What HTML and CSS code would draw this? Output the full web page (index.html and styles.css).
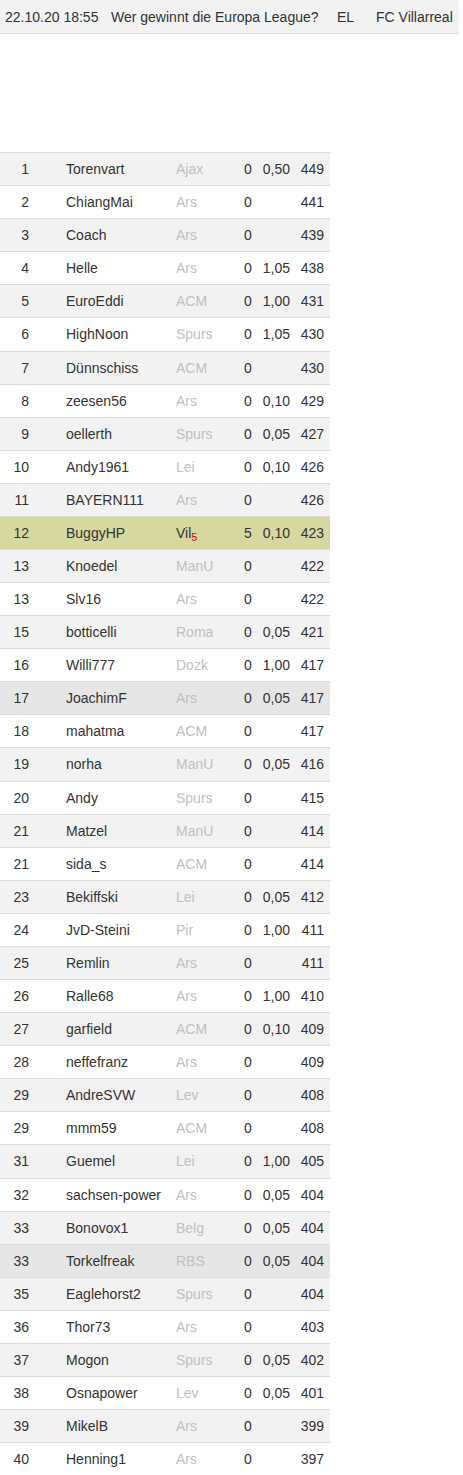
FILE: index.html
```html
<!DOCTYPE html>
<html lang="de">
<head>
<meta charset="utf-8">
<title>Tippspiel</title>
<link rel="stylesheet" href="styles.css">
</head>
<body>
<div class="head">
  <span class="h-date">22.10.20 18:55</span>
  <span class="h-q">Wer gewinnt die Europa League?</span>
  <span class="h-comp">EL</span>
  <span class="h-team">FC Villarreal</span>
</div>
<div class="board">
  <div class="row odd"><span class="rk">1</span><span class="nm">Torenvart</span><span class="tm">Ajax</span><span class="pt">0</span><span class="od">0,50</span><span class="tot">449</span></div>
  <div class="row"><span class="rk">2</span><span class="nm">ChiangMai</span><span class="tm">Ars</span><span class="pt">0</span><span class="od"></span><span class="tot">441</span></div>
  <div class="row odd"><span class="rk">3</span><span class="nm">Coach</span><span class="tm">Ars</span><span class="pt">0</span><span class="od"></span><span class="tot">439</span></div>
  <div class="row"><span class="rk">4</span><span class="nm">Helle</span><span class="tm">Ars</span><span class="pt">0</span><span class="od">1,05</span><span class="tot">438</span></div>
  <div class="row odd"><span class="rk">5</span><span class="nm">EuroEddi</span><span class="tm">ACM</span><span class="pt">0</span><span class="od">1,00</span><span class="tot">431</span></div>
  <div class="row"><span class="rk">6</span><span class="nm">HighNoon</span><span class="tm">Spurs</span><span class="pt">0</span><span class="od">1,05</span><span class="tot">430</span></div>
  <div class="row odd"><span class="rk">7</span><span class="nm">Dünnschiss</span><span class="tm">ACM</span><span class="pt">0</span><span class="od"></span><span class="tot">430</span></div>
  <div class="row"><span class="rk">8</span><span class="nm">zeesen56</span><span class="tm">Ars</span><span class="pt">0</span><span class="od">0,10</span><span class="tot">429</span></div>
  <div class="row odd"><span class="rk">9</span><span class="nm">oellerth</span><span class="tm">Spurs</span><span class="pt">0</span><span class="od">0,05</span><span class="tot">427</span></div>
  <div class="row"><span class="rk">10</span><span class="nm">Andy1961</span><span class="tm">Lei</span><span class="pt">0</span><span class="od">0,10</span><span class="tot">426</span></div>
  <div class="row odd"><span class="rk">11</span><span class="nm">BAYERN111</span><span class="tm">Ars</span><span class="pt">0</span><span class="od"></span><span class="tot">426</span></div>
  <div class="row me"><span class="rk">12</span><span class="nm">BuggyHP</span><span class="tm tm-me">Vil<sub class="hit">5</sub></span><span class="pt">5</span><span class="od">0,10</span><span class="tot">423</span></div>
  <div class="row odd"><span class="rk">13</span><span class="nm">Knoedel</span><span class="tm">ManU</span><span class="pt">0</span><span class="od"></span><span class="tot">422</span></div>
  <div class="row"><span class="rk">13</span><span class="nm">Slv16</span><span class="tm">Ars</span><span class="pt">0</span><span class="od"></span><span class="tot">422</span></div>
  <div class="row odd"><span class="rk">15</span><span class="nm">botticelli</span><span class="tm">Roma</span><span class="pt">0</span><span class="od">0,05</span><span class="tot">421</span></div>
  <div class="row"><span class="rk">16</span><span class="nm">Willi777</span><span class="tm">Dozk</span><span class="pt">0</span><span class="od">1,00</span><span class="tot">417</span></div>
  <div class="row mark"><span class="rk">17</span><span class="nm">JoachimF</span><span class="tm">Ars</span><span class="pt">0</span><span class="od">0,05</span><span class="tot">417</span></div>
  <div class="row"><span class="rk">18</span><span class="nm">mahatma</span><span class="tm">ACM</span><span class="pt">0</span><span class="od"></span><span class="tot">417</span></div>
  <div class="row odd"><span class="rk">19</span><span class="nm">norha</span><span class="tm">ManU</span><span class="pt">0</span><span class="od">0,05</span><span class="tot">416</span></div>
  <div class="row"><span class="rk">20</span><span class="nm">Andy</span><span class="tm">Spurs</span><span class="pt">0</span><span class="od"></span><span class="tot">415</span></div>
  <div class="row odd"><span class="rk">21</span><span class="nm">Matzel</span><span class="tm">ManU</span><span class="pt">0</span><span class="od"></span><span class="tot">414</span></div>
  <div class="row"><span class="rk">21</span><span class="nm">sida_s</span><span class="tm">ACM</span><span class="pt">0</span><span class="od"></span><span class="tot">414</span></div>
  <div class="row odd"><span class="rk">23</span><span class="nm">Bekiffski</span><span class="tm">Lei</span><span class="pt">0</span><span class="od">0,05</span><span class="tot">412</span></div>
  <div class="row"><span class="rk">24</span><span class="nm">JvD-Steini</span><span class="tm">Pir</span><span class="pt">0</span><span class="od">1,00</span><span class="tot">411</span></div>
  <div class="row odd"><span class="rk">25</span><span class="nm">Remlin</span><span class="tm">Ars</span><span class="pt">0</span><span class="od"></span><span class="tot">411</span></div>
  <div class="row"><span class="rk">26</span><span class="nm">Ralle68</span><span class="tm">Ars</span><span class="pt">0</span><span class="od">1,00</span><span class="tot">410</span></div>
  <div class="row odd"><span class="rk">27</span><span class="nm">garfield</span><span class="tm">ACM</span><span class="pt">0</span><span class="od">0,10</span><span class="tot">409</span></div>
  <div class="row"><span class="rk">28</span><span class="nm">neffefranz</span><span class="tm">Ars</span><span class="pt">0</span><span class="od"></span><span class="tot">409</span></div>
  <div class="row odd"><span class="rk">29</span><span class="nm">AndreSVW</span><span class="tm">Lev</span><span class="pt">0</span><span class="od"></span><span class="tot">408</span></div>
  <div class="row"><span class="rk">29</span><span class="nm">mmm59</span><span class="tm">ACM</span><span class="pt">0</span><span class="od"></span><span class="tot">408</span></div>
  <div class="row odd"><span class="rk">31</span><span class="nm">Guemel</span><span class="tm">Lei</span><span class="pt">0</span><span class="od">1,00</span><span class="tot">405</span></div>
  <div class="row"><span class="rk">32</span><span class="nm">sachsen-power</span><span class="tm">Ars</span><span class="pt">0</span><span class="od">0,05</span><span class="tot">404</span></div>
  <div class="row odd"><span class="rk">33</span><span class="nm">Bonovox1</span><span class="tm">Belg</span><span class="pt">0</span><span class="od">0,05</span><span class="tot">404</span></div>
  <div class="row mark"><span class="rk">33</span><span class="nm">Torkelfreak</span><span class="tm">RBS</span><span class="pt">0</span><span class="od">0,05</span><span class="tot">404</span></div>
  <div class="row odd"><span class="rk">35</span><span class="nm">Eaglehorst2</span><span class="tm">Spurs</span><span class="pt">0</span><span class="od"></span><span class="tot">404</span></div>
  <div class="row"><span class="rk">36</span><span class="nm">Thor73</span><span class="tm">Ars</span><span class="pt">0</span><span class="od"></span><span class="tot">403</span></div>
  <div class="row odd"><span class="rk">37</span><span class="nm">Mogon</span><span class="tm">Spurs</span><span class="pt">0</span><span class="od">0,05</span><span class="tot">402</span></div>
  <div class="row"><span class="rk">38</span><span class="nm">Osnapower</span><span class="tm">Lev</span><span class="pt">0</span><span class="od">0,05</span><span class="tot">401</span></div>
  <div class="row odd"><span class="rk">39</span><span class="nm">MikelB</span><span class="tm">Ars</span><span class="pt">0</span><span class="od"></span><span class="tot">399</span></div>
  <div class="row"><span class="rk">40</span><span class="nm">Henning1</span><span class="tm">Ars</span><span class="pt">0</span><span class="od"></span><span class="tot">397</span></div>
</div>
</body>
</html>
```

FILE: styles.css
```css
html, body {
  margin: 0;
  padding: 0;
  background: #fff;
}
body {
  font-family: "Liberation Sans", Arial, sans-serif;
  font-size: 14px;
  line-height: 16.08px;
  color: #333;
  width: 463px;
  overflow: hidden;
}
.head {
  display: grid;
  grid-template-columns: 106px 226px 39px auto;
  width: 459px;
  box-sizing: border-box;
  padding: 8px 0 8px 5px;
  background: #f2f2f2;
  border-top: 1px solid #f2f2f2;
  border-bottom: 1px solid #dcdcdc;
  white-space: nowrap;
}
.board {
  width: 330px;
  margin-top: 118px;
}
.row {
  display: grid;
  grid-template-columns: 29px 147px 68px 8px 38px 34px;
  padding: 8px 6px 8px 0;
  border-top: 1px solid #dcdcdc;
  background: #fff;
  white-space: nowrap;
}
.row.odd { background: #f2f2f2; }
.row.mark { background: #e6e6e6; }
.row.me { background: #d6d89f; }
.rk { text-align: right; }
.nm { padding-left: 37px; }
.tm { color: #c0c0c0; }
.tm-me { color: #333; }
.hit {
  color: #e00000;
  font-size: 11px;
  line-height: 0;
  vertical-align: -3px;
}
.pt { text-align: left; }
.od { text-align: right; }
.tot { text-align: right; }
```
